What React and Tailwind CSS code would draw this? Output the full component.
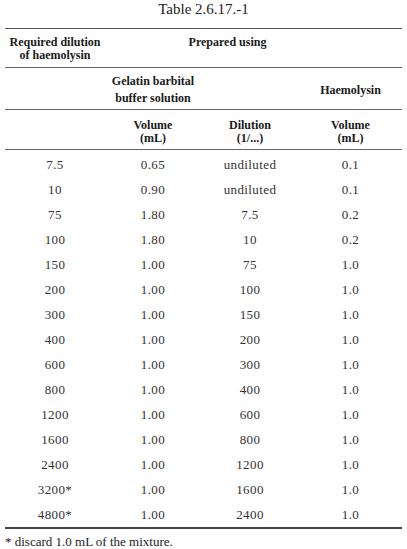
import React from "react";

const rows = [
  ["7.5", "0.65", "undiluted", "0.1"],
  ["10", "0.90", "undiluted", "0.1"],
  ["75", "1.80", "7.5", "0.2"],
  ["100", "1.80", "10", "0.2"],
  ["150", "1.00", "75", "1.0"],
  ["200", "1.00", "100", "1.0"],
  ["300", "1.00", "150", "1.0"],
  ["400", "1.00", "200", "1.0"],
  ["600", "1.00", "300", "1.0"],
  ["800", "1.00", "400", "1.0"],
  ["1200", "1.00", "600", "1.0"],
  ["1600", "1.00", "800", "1.0"],
  ["2400", "1.00", "1200", "1.0"],
  ["3200*", "1.00", "1600", "1.0"],
  ["4800*", "1.00", "2400", "1.0"],
];

export default function App() {
  return (
    <div className="w-[407px] h-[549px] bg-white text-[#1a1a1a] font-['Liberation_Serif',serif] overflow-hidden">
      {/* Title */}
      <div className="h-[28px] pt-[1px] text-center text-[15px] leading-[17px] text-[#222]">
        Table 2.6.17.-1
      </div>

      <div className="ml-[5px] w-[397px]">
        {/* Header row 1 */}
        <div className="grid grid-cols-[100px_96px_98px_103px] border-t-[1.5px] border-[#555] pt-[7px] pb-[5px] text-[12px] leading-[13px] font-bold">
          <div className="text-center">
            Required dilution
            <br />
            of haemolysin
          </div>
          <div className="col-span-3 text-center pr-[52px]">Prepared using</div>
        </div>

        {/* Header row 2 */}
        <div className="grid grid-cols-[100px_96px_98px_103px] items-center border-t border-[#666] pt-[5px] pb-[2px] text-[12px] leading-[17px] font-bold">
          <div />
          <div className="text-center">
            Gelatin barbital
            <br />
            buffer solution
          </div>
          <div />
          <div className="text-center">Haemolysin</div>
        </div>

        {/* Header row 3 */}
        <div className="grid grid-cols-[100px_96px_98px_103px] border-t border-[#666] pt-[9px] pb-[4px] text-[12px] leading-[13px] font-bold">
          <div />
          <div className="text-center">
            Volume
            <br />
            (mL)
          </div>
          <div className="text-center">
            Dilution
            <br />
            (1/...)
          </div>
          <div className="text-center">
            Volume
            <br />
            (mL)
          </div>
        </div>

        {/* Body */}
        <div className="border-t border-[#666] pt-[2px] border-b-2 border-b-[#444] text-[13px] tracking-[0.4px] text-[#333]">
          {rows.map((r, i) => (
            <div
              key={i}
              className="grid grid-cols-[100px_96px_98px_103px] h-[25px] items-center"
            >
              {r.map((c, j) => (
                <div key={j} className="text-center">
                  {c}
                </div>
              ))}
            </div>
          ))}
        </div>

        {/* Footnote */}
        <div className="pt-[5px] text-[13px] leading-[15px] text-[#222]">
          * discard 1.0 mL of the mixture.
        </div>
      </div>
    </div>
  );
}
